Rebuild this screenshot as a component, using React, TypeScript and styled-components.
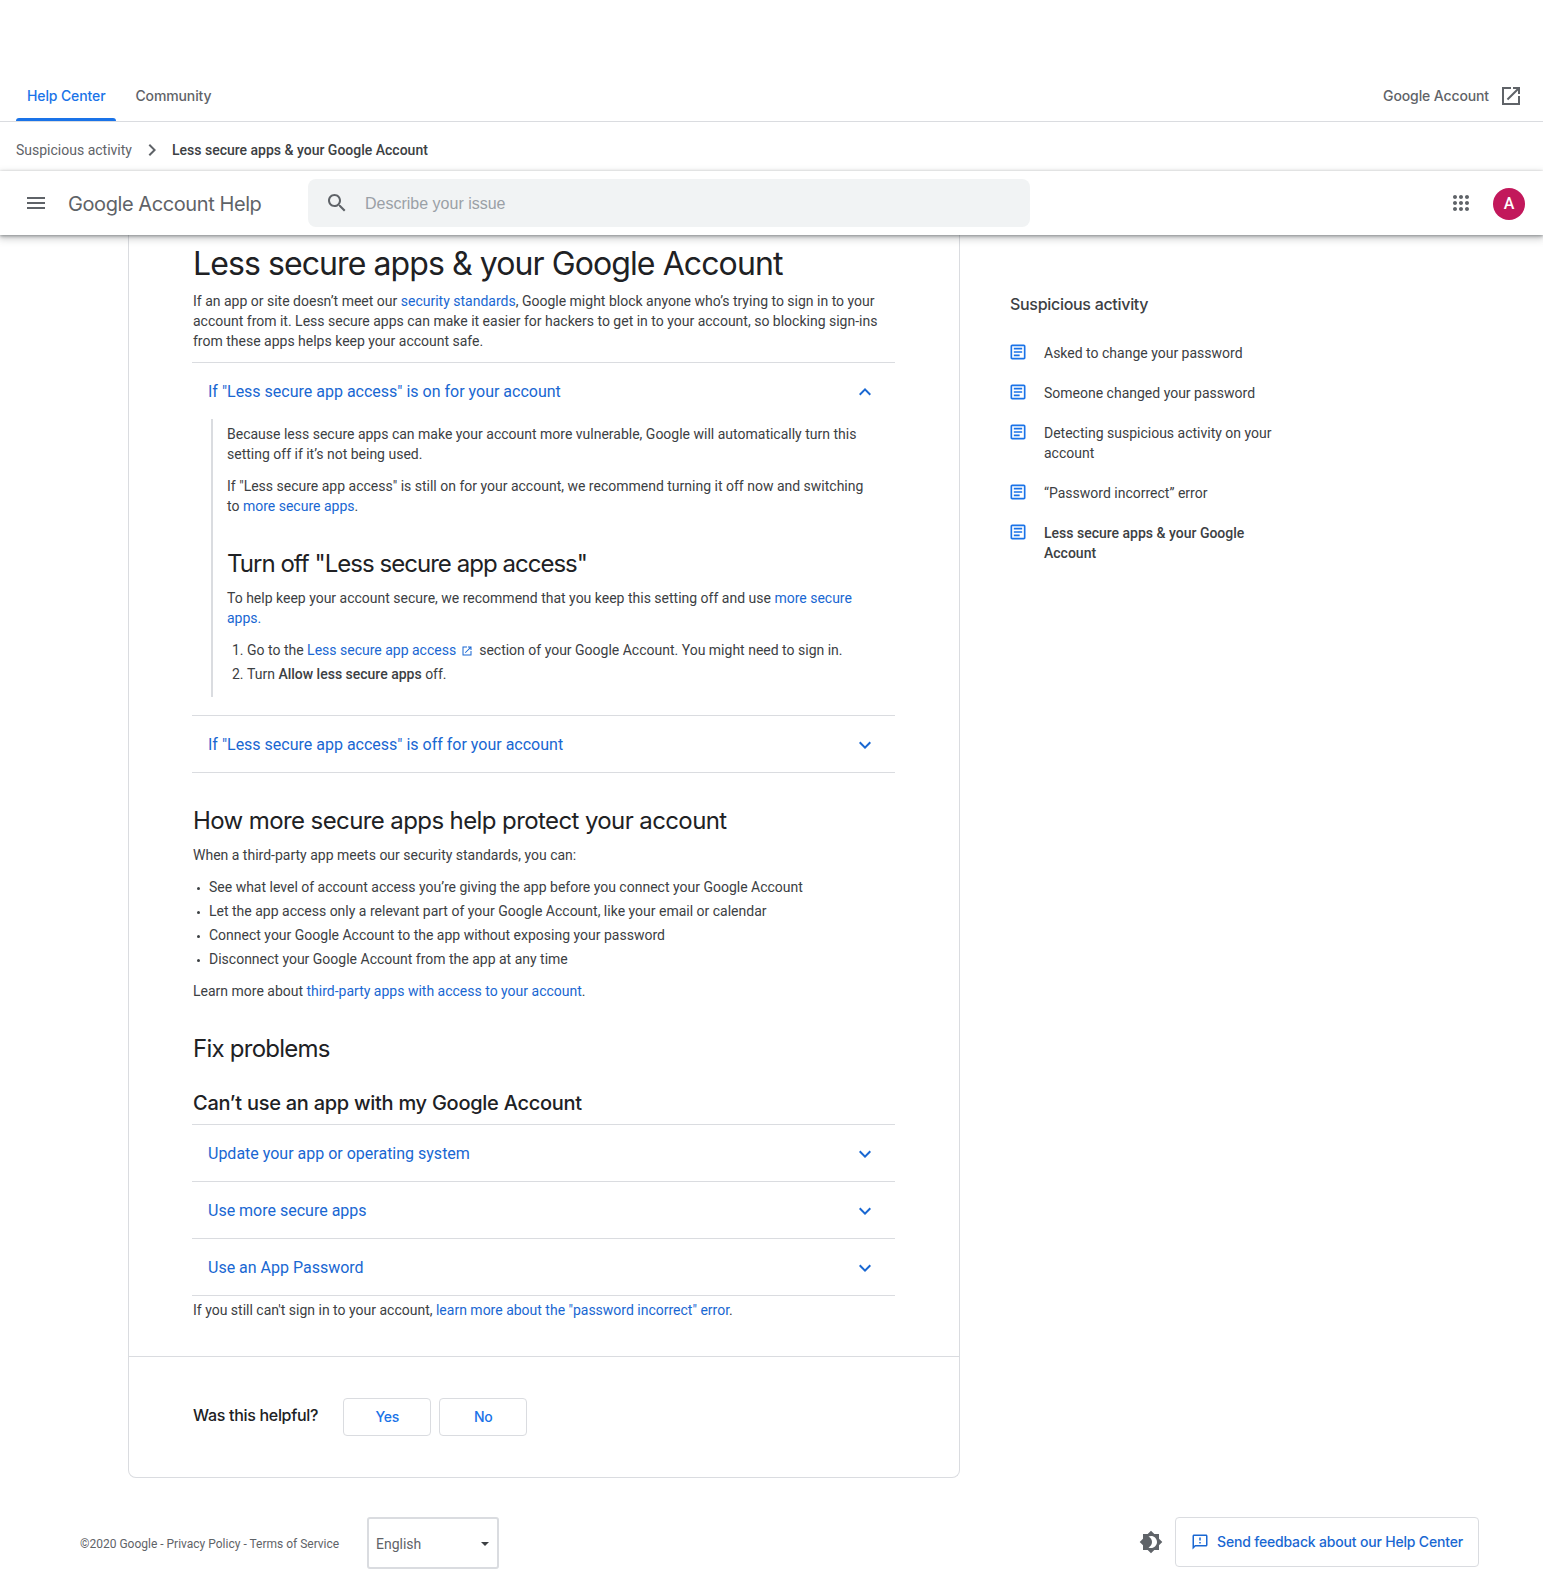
import React from 'react'
import styled, { createGlobalStyle } from 'styled-components'

const BLUE = '#1a73e8'
const LINK = '#1967d2'
const TEXT = '#3c4043'
const LINE = '#dadce0'
const HEAD_FONT = 'Inter, "Open Sans", Roboto, sans-serif'

const paths = {
  menu: 'M3 18h18v-2H3v2zm0-5h18v-2H3v2zm0-7v2h18V6H3z',
  search:
    'M15.5 14h-.79l-.28-.27C15.41 12.59 16 11.11 16 9.5 16 5.91 13.09 3 9.5 3S3 5.91 3 9.5 5.91 16 9.5 16c1.61 0 3.09-.59 4.23-1.57l.27.28v.79l5 4.99L20.49 19l-4.99-5zm-6 0C7.01 14 5 11.99 5 9.5S7.01 5 9.5 5 14 7.01 14 9.5 11.99 14 9.5 14z',
  apps:
    'M6 8c1.1 0 2-.9 2-2s-.9-2-2-2-2 .9-2 2 .9 2 2 2zm6 12c1.1 0 2-.9 2-2s-.9-2-2-2-2 .9-2 2 .9 2 2 2zm-6 0c1.1 0 2-.9 2-2s-.9-2-2-2-2 .9-2 2 .9 2 2 2zm0-6c1.1 0 2-.9 2-2s-.9-2-2-2-2 .9-2 2 .9 2 2 2zm6 0c1.1 0 2-.9 2-2s-.9-2-2-2-2 .9-2 2 .9 2 2 2zm4-8c0 1.1.9 2 2 2s2-.9 2-2-.9-2-2-2-2 .9-2 2zm-4 2c1.1 0 2-.9 2-2s-.9-2-2-2-2 .9-2 2 .9 2 2 2zm6 6c1.1 0 2-.9 2-2s-.9-2-2-2-2 .9-2 2 .9 2 2 2zm0 6c1.1 0 2-.9 2-2s-.9-2-2-2-2 .9-2 2 .9 2 2 2z',
  open: 'M19 19H5V5h7V3H3v18h18v-9h-2v7zM14 3v2h3.59l-9.83 9.83 1.41 1.41L19 6.41V10h2V3h-7z',
  next: 'M10 6L8.59 7.41 13.17 12l-4.58 4.59L10 18l6-6z',
  down: 'M16.59 8.59L12 13.17 7.41 8.59 6 10l6 6 6-6z',
  up: 'M12 8l-6 6 1.41 1.41L12 10.83l4.59 4.58L18 14z',
  article:
    'M19 3H5c-1.1 0-2 .9-2 2v14c0 1.1.9 2 2 2h14c1.1 0 2-.9 2-2V5c0-1.1-.9-2-2-2zm0 16H5V5h14v14zM7 7h10v2H7zm0 4h10v2H7zm0 4h7v2H7z',
  theme:
    'M20 8.69V4h-4.69L12 .69 8.69 4H4v4.69L.69 12 4 15.31V20h4.69L12 23.31 15.31 20H20v-4.69L23.31 12 20 8.69zM12 18c-.89 0-1.74-.2-2.5-.55C11.56 16.5 13 14.42 13 12s-1.44-4.5-3.5-5.45C10.26 6.2 11.11 6 12 6c3.31 0 6 2.69 6 6s-2.69 6-6 6z',
  feedback:
    'M20 2H4c-1.1 0-2 .9-2 2v18l4-4h14c1.1 0 2-.9 2-2V4c0-1.1-.9-2-2-2zm0 14H5.17L4 17.17V4h16v12zM11 12h2v2h-2zm0-6h2v4h-2z',
}

const GlobalStyle = createGlobalStyle`
  html, body {
    margin: 0;
    background: #fff;
    font-family: Roboto, "Liberation Sans", sans-serif;
    color: ${TEXT};
    font-size: 14px;
    line-height: 20px;
  }
  * { box-sizing: border-box; }
`

const Svg = styled.svg<{ $color?: string }>`
  display: block;
  flex: none;
  fill: ${(p) => p.$color || 'currentColor'};
`

const Icon = ({ d, size, color }: { d: string; size: number; color?: string }) => (
  <Svg viewBox="0 0 24 24" width={size} height={size} $color={color}>
    <path d={d} />
  </Svg>
)

const Page = styled.div`
  width: 1543px;
  height: 1582px;
  overflow: hidden;
`

const TabBar = styled.div`
  height: 122px;
  padding: 72px 20px 0 16px;
  display: flex;
  align-items: stretch;
  justify-content: space-between;
  border-bottom: 1px solid ${LINE};
`

const Tabs = styled.div`
  display: flex;
  gap: 8px;
`

const Tab = styled.div<{ $active?: boolean }>`
  position: relative;
  padding: 0 11px 2px;
  display: flex;
  align-items: center;
  font-family: ${HEAD_FONT};
  font-size: 14px;
  font-weight: 500;
  letter-spacing: -0.12px;
  color: ${(p) => (p.$active ? BLUE : '#5f6368')};
  ${(p) => p.$active && `
    &::after {
      content: '';
      position: absolute;
      left: 0;
      right: 0;
      bottom: 0;
      height: 3px;
      background: ${BLUE};
      border-radius: 3px 3px 0 0;
    }
  `}
`

const AccountLink = styled.div`
  display: flex;
  align-items: center;
  gap: 10px;
  padding-bottom: 2px;
  font-family: ${HEAD_FONT};
  font-size: 14px;
  font-weight: 500;
  letter-spacing: -0.12px;
  color: #5f6368;
`

const Crumbs = styled.div`
  height: 49px;
  padding: 7px 16px 0;
  display: flex;
  align-items: center;
  color: #5f6368;
`

const CrumbSep = styled.span`
  margin: 0 8px;
  color: #5f6368;
`

const CrumbNow = styled.span`
  font-weight: 500;
  color: ${TEXT};
`

const Header = styled.header`
  position: relative;
  z-index: 2;
  height: 64px;
  background: #fff;
  display: flex;
  align-items: center;
  padding: 0 18px 0 24px;
  box-shadow: 0 1px 3px rgba(60, 64, 67, 0.5), 0 3px 7px 1px rgba(60, 64, 67, 0.25);
  color: #5f6368;
`

const ProductName = styled.div`
  margin-left: 20px;
  padding-top: 2px;
  width: 240px;
  font-family: ${HEAD_FONT};
  font-size: 20px;
  letter-spacing: -0.42px;
  color: #5f6368;
`

const SearchBox = styled.div`
  width: 722px;
  height: 48px;
  background: #f1f3f4;
  border-radius: 8px;
  padding: 0 17px;
  display: flex;
  align-items: center;
  gap: 16px;
  font-family: "Liberation Sans", sans-serif;
  font-size: 16px;
  color: #9aa0a6;
`

const SearchHint = styled.span`
  padding-top: 2px;
`

const HeaderEnd = styled.div`
  margin-left: auto;
  display: flex;
  align-items: center;
  gap: 20px;
`

const Avatar = styled.div`
  width: 32px;
  height: 32px;
  margin-top: 2px;
  border-radius: 50%;
  background: #c2185b;
  color: #fff;
  display: flex;
  align-items: center;
  justify-content: center;
  font-size: 16px;
  font-weight: 500;
`

const Main = styled.main`
  display: flex;
  align-items: flex-start;
  padding-left: 128px;
`

const Card = styled.article`
  width: 832px;
  border: 1px solid ${LINE};
  border-top: 0;
  border-radius: 0 0 8px 8px;
`

const CardBody = styled.div`
  padding: 9px 64px 36px 64px;
`

const Title = styled.h1`
  margin: 0 0 7px;
  font-family: ${HEAD_FONT};
  font-size: 32px;
  font-weight: 400;
  line-height: 40px;
  letter-spacing: -0.91px;
  color: #202124;
`

const Text = styled.p<{ $mb?: number; $mt?: number }>`
  margin: ${(p) => p.$mt ?? 0}px 0 ${(p) => p.$mb ?? 12}px;
`

const Link = styled.a`
  color: ${LINK};
`

const AccordionRow = styled.div`
  height: 57px;
  margin-left: -1px;
  padding: 2px 18px 0 16px;
  display: flex;
  align-items: center;
  justify-content: space-between;
  border-top: 1px solid ${LINE};
  font-size: 16px;
  color: ${LINK};
`

const AccordionList = styled.div`
  border-bottom: 1px solid ${LINE};
  margin-left: -1px;
  & > div { margin-left: 0; }
`

const AccordionPanel = styled.div`
  margin: 0 0 18px 18px;
  padding: 5px 16px 1px 14px;
  border-left: 2px solid ${LINE};
`

const SubTitle = styled.h2<{ $top: number; $bottom: number; $spacing: number }>`
  margin: ${(p) => p.$top}px 0 ${(p) => p.$bottom}px;
  font-family: ${HEAD_FONT};
  font-size: 24px;
  font-weight: 400;
  line-height: 32px;
  letter-spacing: ${(p) => p.$spacing}px;
  color: #202124;
`

const MinorTitle = styled.h3`
  margin: 0 0 7px;
  font-family: ${HEAD_FONT};
  font-size: 20px;
  font-weight: 500;
  line-height: 28px;
  letter-spacing: -0.27px;
  color: #202124;
`

const Steps = styled.ol`
  margin: 0 0 12px;
  padding-left: 20px;
  li { margin-bottom: 4px; }
`

const Bullets = styled.ul`
  margin: 0 0 12px;
  padding: 0;
  list-style: none;
  li {
    margin-bottom: 4px;
    padding-left: 16px;
  }
  li::before {
    content: '';
    display: inline-block;
    width: 3px;
    height: 3px;
    margin: 0 9px 2px -12px;
    border-radius: 50%;
    background: ${TEXT};
  }
`

const Strong = styled.b`
  font-weight: 500;
`

const ExternalGlyph = styled.span`
  display: inline-block;
  vertical-align: -2px;
  margin: 0 6px 0 5px;
`

const Helpful = styled.div`
  border-top: 1px solid ${LINE};
  height: 121px;
  padding: 0 64px 1px;
  display: flex;
  align-items: center;
  gap: 8px;
`

const HelpfulLabel = styled.div`
  margin-right: 17px;
  margin-bottom: 3px;
  font-family: ${HEAD_FONT};
  font-size: 16px;
  font-weight: 500;
  letter-spacing: -0.3px;
  color: #202124;
`

const VoteButton = styled.button`
  width: 88px;
  height: 38px;
  background: #fff;
  border: 1px solid ${LINE};
  border-radius: 4px;
  font-family: ${HEAD_FONT};
  font-size: 14px;
  font-weight: 500;
  letter-spacing: -0.25px;
  color: ${BLUE};
`

const Side = styled.aside`
  margin-left: 50px;
  width: 290px;
  padding-top: 58px;
`

const SideTitle = styled.div`
  margin-bottom: 28px;
  font-family: ${HEAD_FONT};
  font-size: 16px;
  font-weight: 500;
  line-height: 22px;
  letter-spacing: -0.3px;
  color: ${TEXT};
`

const SideItem = styled.div<{ $current?: boolean }>`
  display: flex;
  gap: 16px;
  margin: 0 0 20px -2px;
  width: 270px;
  font-weight: ${(p) => (p.$current ? 500 : 400)};
  & > svg { margin-top: -1px; }
`

const Footer = styled.footer`
  height: 52px;
  margin-top: 39px;
  padding: 0 64px 0 80px;
  display: flex;
  align-items: center;
`

const Legal = styled.div`
  font-size: 12px;
  color: #5f6368;
  width: 287px;
  padding-top: 2px;
`

const LanguageSelect = styled.div`
  width: 132px;
  height: 52px;
  border: 2px solid ${LINE};
  border-radius: 3px;
  padding: 2px 8px 0 7px;
  display: flex;
  align-items: center;
  justify-content: space-between;
  font-size: 14px;
  color: #5f6368;
  &::after {
    content: '';
    border: 4px solid transparent;
    border-top-color: #3c4043;
    border-bottom: 0;
  }
`

const FooterEnd = styled.div`
  margin-left: auto;
  margin-bottom: 3px;
  display: flex;
  align-items: center;
  gap: 12px;
`

const FeedbackButton = styled.div`
  width: 304px;
  height: 50px;
  border: 1px solid ${LINE};
  border-radius: 4px;
  display: flex;
  align-items: center;
  justify-content: center;
  gap: 8px;
  font-family: ${HEAD_FONT};
  font-size: 14px;
  font-weight: 500;
  letter-spacing: -0.18px;
  color: ${LINK};
`

const related = [
  'Asked to change your password',
  'Someone changed your password',
  'Detecting suspicious activity on your account',
  '“Password incorrect” error',
]

const problems = ['Update your app or operating system', 'Use more secure apps', 'Use an App Password']

const App = () => (
  <Page>
    <GlobalStyle />
    <TabBar>
      <Tabs>
        <Tab $active>Help Center</Tab>
        <Tab>Community</Tab>
      </Tabs>
      <AccountLink>
        Google Account
        <Icon d={paths.open} size={24} color="#5f6368" />
      </AccountLink>
    </TabBar>
    <Crumbs>
      Suspicious activity
      <CrumbSep>
        <Icon d={paths.next} size={24} />
      </CrumbSep>
      <CrumbNow>Less secure apps &amp; your Google Account</CrumbNow>
    </Crumbs>
    <Header>
      <Icon d={paths.menu} size={24} />
      <ProductName>Google Account Help</ProductName>
      <SearchBox>
        <Icon d={paths.search} size={24} color="#5f6368" />
        <SearchHint>Describe your issue</SearchHint>
      </SearchBox>
      <HeaderEnd>
        <Icon d={paths.apps} size={24} color="#5f6368" />
        <Avatar>A</Avatar>
      </HeaderEnd>
    </Header>
    <Main>
      <Card>
        <CardBody>
          <Title>Less secure apps &amp; your Google Account</Title>
          <Text $mb={11}>
            If an app or site doesn’t meet our <Link>security standards</Link>, Google might block anyone who’s trying
            to sign in to your account from it. Less secure apps can make it easier for hackers to get in to your
            account, so blocking sign-ins from these apps helps keep your account safe.
          </Text>
          <AccordionRow>
            If "Less secure app access" is on for your account
            <Icon d={paths.up} size={24} color={LINK} />
          </AccordionRow>
          <AccordionPanel>
            <Text>
              Because less secure apps can make your account more vulnerable, Google will automatically turn this
              setting off if it’s not being used.
            </Text>
            <Text>
              If "Less secure app access" is still on for your account, we recommend turning it off now and switching to{' '}
              <Link>more secure apps</Link>.
            </Text>
            <SubTitle $top={32} $bottom={8} $spacing={-0.97}>
              Turn off "Less secure app access"
            </SubTitle>
            <Text>
              To help keep your account secure, we recommend that you keep this setting off and use{' '}
              <Link>more secure apps.</Link>
            </Text>
            <Steps>
              <li>
                Go to the <Link>Less secure app access</Link>
                <ExternalGlyph>
                  <Icon d={paths.open} size={12} color={LINK} />
                </ExternalGlyph>
                section of your Google Account. You might need to sign in.
              </li>
              <li>
                Turn <Strong>Allow less secure apps</Strong> off.
              </li>
            </Steps>
          </AccordionPanel>
          <AccordionList>
            <AccordionRow>
              If "Less secure app access" is off for your account
              <Icon d={paths.down} size={24} color={LINK} />
            </AccordionRow>
          </AccordionList>
          <SubTitle $top={32} $bottom={8} $spacing={-0.6}>
            How more secure apps help protect your account
          </SubTitle>
          <Text>When a third-party app meets our security standards, you can:</Text>
          <Bullets>
            <li>See what level of account access you’re giving the app before you connect your Google Account</li>
            <li>Let the app access only a relevant part of your Google Account, like your email or calendar</li>
            <li>Connect your Google Account to the app without exposing your password</li>
            <li>Disconnect your Google Account from the app at any time</li>
          </Bullets>
          <Text>
            Learn more about <Link>third-party apps with access to your account</Link>.
          </Text>
          <SubTitle $top={32} $bottom={24} $spacing={-0.75}>
            Fix problems
          </SubTitle>
          <MinorTitle>Can’t use an app with my Google Account</MinorTitle>
          <AccordionList>
            {problems.map((label) => (
              <AccordionRow key={label}>
                {label}
                <Icon d={paths.down} size={24} color={LINK} />
              </AccordionRow>
            ))}
          </AccordionList>
          <Text $mb={0} $mt={4}>
            If you still can't sign in to your account, <Link>learn more about the "password incorrect" error</Link>.
          </Text>
        </CardBody>
        <Helpful>
          <HelpfulLabel>Was this helpful?</HelpfulLabel>
          <VoteButton>Yes</VoteButton>
          <VoteButton>No</VoteButton>
        </Helpful>
      </Card>
      <Side>
        <SideTitle>Suspicious activity</SideTitle>
        {related.map((label) => (
          <SideItem key={label}>
            <Icon d={paths.article} size={20} color={BLUE} />
            <span>{label}</span>
          </SideItem>
        ))}
        <SideItem $current>
          <Icon d={paths.article} size={20} color={BLUE} />
          <span>Less secure apps &amp; your Google Account</span>
        </SideItem>
      </Side>
    </Main>
    <Footer>
      <Legal>©2020 Google - Privacy Policy - Terms of Service</Legal>
      <LanguageSelect>English</LanguageSelect>
      <FooterEnd>
        <Icon d={paths.theme} size={24} color="#5f6368" />
        <FeedbackButton>
          <Icon d={paths.feedback} size={18} color={LINK} />
          Send feedback about our Help Center
        </FeedbackButton>
      </FooterEnd>
    </Footer>
  </Page>
)

export default App
